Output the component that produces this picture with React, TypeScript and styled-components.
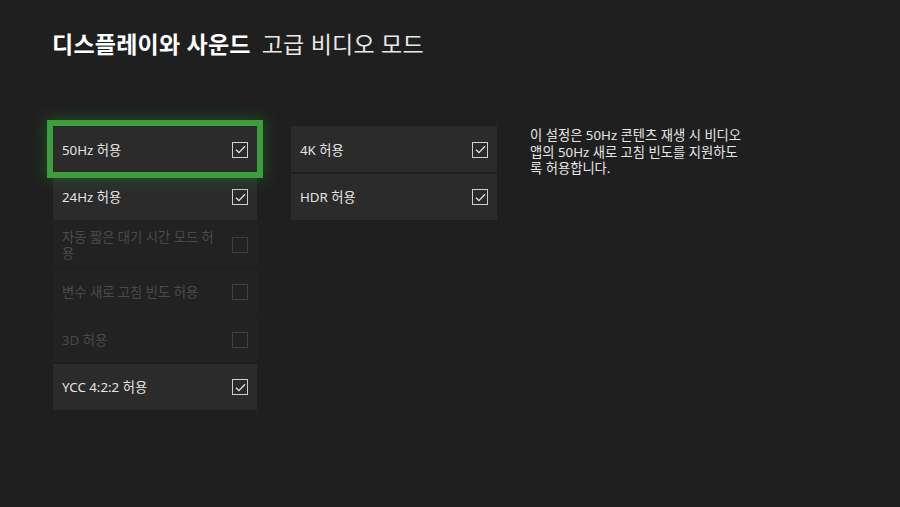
import styled, { createGlobalStyle, css } from "styled-components";

const GlobalStyle = createGlobalStyle`
  html, body {
    margin: 0;
    padding: 0;
    background: #1f1f1f;
  }
  body {
    font-family: "Noto Sans", "Noto Sans CJK KR", sans-serif;
    color: #e6e6e6;
  }
`;

const Page = styled.main`
  width: 900px;
  height: 507px;
  box-sizing: border-box;
  padding: 28px 0 0 52px;
  background: #1f1f1f;
  overflow: hidden;
`;

const Header = styled.h1`
  margin: 0;
  display: flex;
  gap: 11px;
  align-items: baseline;
  font-size: 23px;
  line-height: 32px;
  letter-spacing: 0.01em;
`;

const Section = styled.span`
  font-weight: 700;
  color: #ffffff;
`;

const Subsection = styled.span`
  font-weight: 400;
  color: #e8e8e8;
`;

const Body = styled.div`
  display: flex;
  align-items: flex-start;
  margin-top: 66px;
  margin-left: 1px;
`;

const Column = styled.div<{ $width: number; $gap: number }>`
  display: flex;
  flex-direction: column;
  gap: 1.5px;
  width: ${(p) => p.$width}px;
  margin-right: ${(p) => p.$gap}px;
`;

const Tile = styled.div<{ $focused?: boolean; $disabled?: boolean }>`
  display: flex;
  align-items: center;
  justify-content: space-between;
  height: 46px;
  box-sizing: border-box;
  padding: 1px 9px 0;
  background: ${(p) => (p.$disabled ? "#222222" : "#2b2b2b")};
  color: ${(p) => (p.$disabled ? "#4a4a4a" : "#e4e4e4")};
  font-size: 13.3px;
  line-height: 16px;
  ${(p) =>
    p.$focused &&
    css`
      position: relative;
      z-index: 1;
      box-shadow: 0 0 0 6px #3c9e3c, 0 0 14px 8px rgba(40, 150, 40, 0.35);
    `}
`;

const Label = styled.span`
  max-width: 160px;
`;

const Box = styled.span<{ $disabled?: boolean }>`
  flex: none;
  width: 16px;
  height: 16px;
  box-sizing: border-box;
  border: 1.5px solid ${(p) => (p.$disabled ? "#3e3e3e" : "#cfcfcf")};
  display: flex;
  align-items: center;
  justify-content: center;
`;

const Description = styled.p`
  margin: 0;
  width: 218px;
  padding-top: 1px;
  font-size: 13.3px;
  line-height: 16.5px;
  color: #e6e6e6;
`;

type Option = { label: string; checked: boolean; disabled?: boolean; focused?: boolean };

const leftOptions: Option[] = [
  { label: "50Hz 허용", checked: true, focused: true },
  { label: "24Hz 허용", checked: true },
  { label: "자동 짧은 대기 시간 모드 허용", checked: false, disabled: true },
  { label: "변수 새로 고침 빈도 허용", checked: false, disabled: true },
  { label: "3D 허용", checked: false, disabled: true },
  { label: "YCC 4:2:2 허용", checked: true },
];

const rightOptions: Option[] = [
  { label: "4K 허용", checked: true },
  { label: "HDR 허용", checked: true },
];

function Checkbox({ checked, disabled }: { checked: boolean; disabled?: boolean }) {
  return (
    <Box $disabled={disabled}>
      {checked && (
        <svg width="11" height="9" viewBox="0 0 11 9" fill="none">
          <path d="M1 4.8 L3.9 7.6 L10 1.2" stroke="#e6e6e6" strokeWidth="1.3" />
        </svg>
      )}
    </Box>
  );
}

function OptionTile({ option }: { option: Option }) {
  return (
    <Tile $focused={option.focused} $disabled={option.disabled}>
      <Label>{option.label}</Label>
      <Checkbox checked={option.checked} disabled={option.disabled} />
    </Tile>
  );
}

export default function App() {
  return (
    <>
      <GlobalStyle />
      <Page>
        <Header>
          <Section>디스플레이와 사운드</Section>
          <Subsection>고급 비디오 모드</Subsection>
        </Header>
        <Body>
          <Column $width={204} $gap={34}>
            {leftOptions.map((o) => (
              <OptionTile key={o.label} option={o} />
            ))}
          </Column>
          <Column $width={206} $gap={33}>
            {rightOptions.map((o) => (
              <OptionTile key={o.label} option={o} />
            ))}
          </Column>
          <Description>
            이 설정은 50Hz 콘텐츠 재생 시 비디오 앱의 50Hz 새로 고침 빈도를 지원하도록 허용합니다.
          </Description>
        </Body>
      </Page>
    </>
  );
}
